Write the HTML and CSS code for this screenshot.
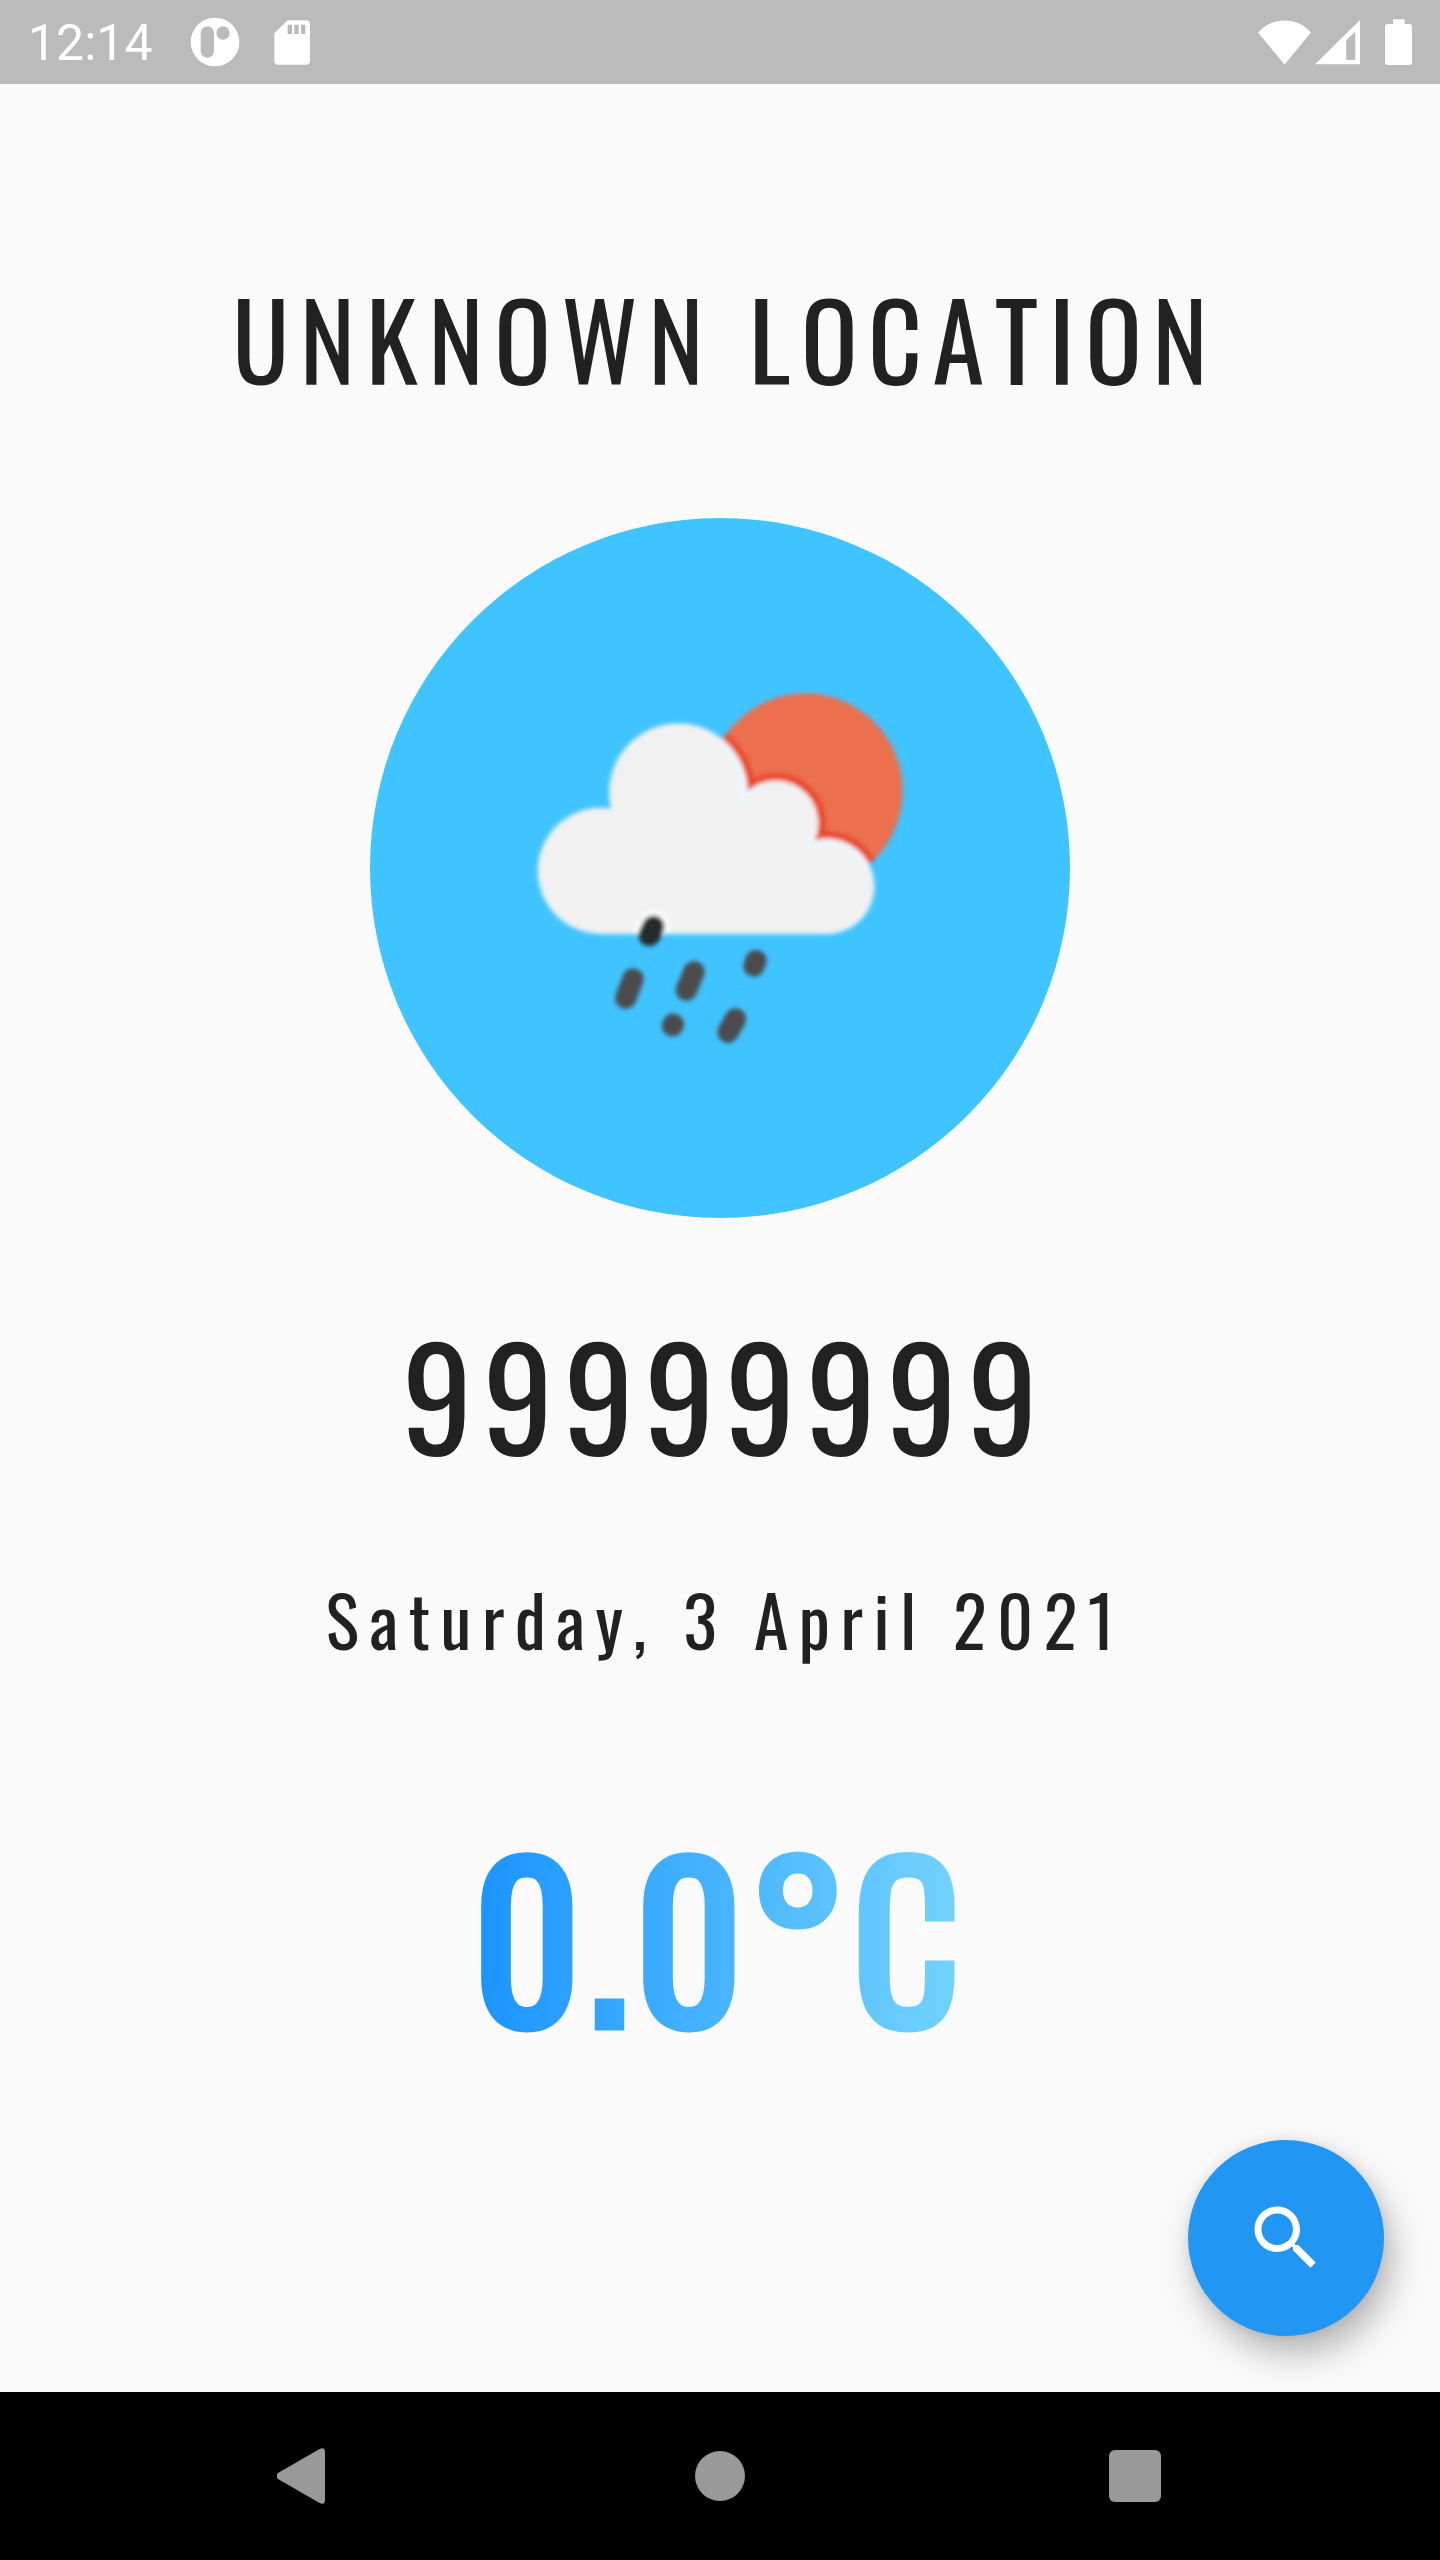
FILE: index.html
```html
<!DOCTYPE html>
<html lang="en">
<head>
  <meta charset="utf-8">
  <meta name="viewport" content="width=device-width, initial-scale=1">
  <title>Weather</title>
  <link rel="stylesheet" href="styles.css">
</head>
<body>
  <header class="status-bar">
    <div class="status-group">
      <time class="clock">12:14</time>
      <svg class="icon-app" viewBox="0 0 150 150" aria-hidden="true">
        <path fill="#fff" fill-rule="evenodd" d="M75 2a73 73 0 1 1 0 146a73 73 0 1 1 0-146zM52 28a20 20 0 0 0-20 20v54a20 20 0 0 0 40 0V48a20 20 0 0 0-20-20zM99 28a20 20 0 1 0 0 40a20 20 0 1 0 0-40z"/>
      </svg>
      <svg class="icon-sd" viewBox="0 0 108 135" aria-hidden="true">
        <path fill="#fff" fill-rule="evenodd" d="M41 1H96a12 12 0 0 1 12 12V122a12 12 0 0 1-12 12H13a12 12 0 0 1-12-12V40zM41 14v28h13V14zM61 14v28h13V14zM81 14v28h13V14z"/>
      </svg>
    </div>
    <div class="status-group">
      <svg class="icon-wifi" viewBox="0 0 159 134" aria-hidden="true">
        <path fill="#fff" d="M79.500 133L0 37C20 14 48 1 79.500 1S139 14 159 37z"/>
      </svg>
      <svg class="icon-signal" viewBox="0 0 134 134" aria-hidden="true">
        <path fill="#fff" fill-rule="evenodd" d="M134 0V132H0zM120 34L93 60V119H120z"/>
      </svg>
      <svg class="icon-battery" viewBox="0 0 81 138" aria-hidden="true">
        <path fill="#fff" d="M24 1H59V15H73a8 8 0 0 1 8 8V130a8 8 0 0 1-8 8H8a8 8 0 0 1-8-8V23a8 8 0 0 1 8-8H24z"/>
      </svg>
    </div>
  </header>

  <main class="weather">
    <h1 class="location">UNKNOWN LOCATION</h1>
    <div class="badge">
      <svg class="badge-art" viewBox="-390 -426 2100 2100" role="img" aria-label="Rain with sun">
        <defs>
          <g id="cloud">
            <circle cx="302" cy="632" r="189"/>
            <circle cx="535" cy="398" r="208"/>
            <circle cx="828" cy="488" r="127"/>
            <circle cx="980" cy="679" r="143"/>
            <path d="M302 450H535L828 440L980 600V822H302z"/>
          </g>
          <clipPath id="sun-clip"><circle cx="916" cy="392" r="292"/></clipPath>
          <clipPath id="cloud-clip">
            <circle cx="302" cy="632" r="189"/>
            <circle cx="535" cy="398" r="208"/>
            <circle cx="828" cy="488" r="127"/>
            <circle cx="980" cy="679" r="143"/>
            <path d="M302 450H535L828 440L980 600V822H302z"/>
          </clipPath>
          <filter id="soft"><feGaussianBlur stdDeviation="7"/></filter>
        </defs>
        <g filter="url(#soft)">
          <circle cx="916" cy="392" r="292" fill="#ec6f4d"/>
          <g clip-path="url(#sun-clip)"><use href="#cloud" fill="#e9482c" stroke="#e9482c" stroke-width="44"/></g>
          <use href="#cloud" fill="#f1f1f1"/>
          <g clip-path="url(#cloud-clip)" fill="none" stroke="#edf7fd" stroke-width="46">
            <path d="M670 238A208 208 0 0 1 743 382A127 127 0 0 1 954 535A143 143 0 0 1 1110 618"/>
          </g>
          <path d="M448 825L462 798" stroke="#fff" stroke-width="96" stroke-linecap="round" clip-path="url(#cloud-clip)"/>
          <path d="M448 825L460 800" stroke="#282a2c" stroke-width="66" stroke-linecap="round"/>
          <g stroke="#4b4b4e" stroke-width="64" stroke-linecap="round">
            <path d="M377 1014L399 957M559 990L582 935M684 1117L706 1077M762 918L768 902M517 1097L520 1093"/>
          </g>
        </g>
      </svg>
    </div>
    <p class="reading">99999999</p>
    <p class="date">Saturday, 3 April 2021</p>
    <p class="temperature">0.0°C</p>
    <button class="search-button" type="button" aria-label="Search">
      <svg class="icon-search" viewBox="0 0 24 24" aria-hidden="true">
        <path fill="#fff" d="M15.500 14h-.79l-.28-.27C15.410 12.590 16 11.110 16 9.500 16 5.910 13.090 3 9.500 3S3 5.910 3 9.500 5.910 16 9.500 16c1.610 0 3.090-.59 4.230-1.570l.27.28v.79l5 4.990L20.490 19l-4.990-5zm-6 0C7.010 14 5 11.990 5 9.500S7.010 5 9.500 5 14 7.010 14 9.500 11.990 14 9.500 14z"/>
      </svg>
    </button>
  </main>

  <nav class="nav-bar" aria-label="System navigation">
    <button class="nav-button" type="button" aria-label="Back">
      <svg class="nav-icon" viewBox="0 0 56 56" aria-hidden="true"><path fill="#999" d="M1 25L43 .8Q48 -1 48 4V52Q48 57 43 55.200L1 31Q-2 28 1 25z"/></svg>
    </button>
    <button class="nav-button" type="button" aria-label="Home">
      <svg class="nav-icon" viewBox="0 0 56 56" aria-hidden="true"><circle cx="28" cy="28" r="25" fill="#999"/></svg>
    </button>
    <button class="nav-button" type="button" aria-label="Recent apps">
      <svg class="nav-icon" viewBox="0 0 56 56" aria-hidden="true"><rect x="2" y="2" width="52" height="52" rx="6" fill="#999"/></svg>
    </button>
  </nav>
</body>
</html>
```

FILE: styles.css
```css
* {
  box-sizing: border-box;
}

body {
  margin: 0;
  min-height: 100vh;
  display: flex;
  flex-direction: column;
  background: #fafafa;
  color: #212121;
  font-family: Oswald, "Roboto Condensed", sans-serif;
  font-kerning: none;
}

h1,
p {
  margin: 0;
}

svg {
  display: block;
}

button {
  border: 0;
  padding: 0;
  cursor: pointer;
}

/* Status bar */
.status-bar {
  display: flex;
  justify-content: space-between;
  align-items: center;
  height: 84px;
  padding: 0 28px;
  background: #bbb;
  color: #fff;
}

.status-group {
  display: flex;
  align-items: center;
}

.clock {
  padding-top: 2px;
  font: 400 50px/60px Roboto, sans-serif;
}

.icon-app {
  width: 50px;
  height: 50px;
  margin-left: 37px;
}

.icon-sd {
  width: 36px;
  height: 45px;
  margin-left: 34px;
}

.icon-wifi {
  width: 53px;
  height: 45px;
}

.icon-signal {
  width: 45px;
  height: 45px;
  margin: 0 25px 0 4px;
}

.icon-battery {
  width: 27px;
  height: 46px;
}

/* Weather */
.weather {
  position: relative;
  flex: 1;
  display: flex;
  flex-direction: column;
  align-items: center;
  padding: 176px 56px 56px;
  text-align: center;
}

/* The left padding balances the tracking after the last letter */
.location {
  padding-left: 0.1em;
  font-size: 105px;
  line-height: 156px;
  font-weight: 400;
  letter-spacing: 0.1em;
}

.badge {
  width: 700px;
  max-width: 100%;
  margin: 102px 0 70px;
  border-radius: 50%;
  background: #40c4ff;
}

.badge-art {
  width: 100%;
}

.reading {
  padding-left: 0.075em;
  font-size: 140px;
  line-height: 210px;
  letter-spacing: 0.075em;
}

.date {
  margin-top: 68px;
  padding-left: 0.15em;
  font-size: 70px;
  line-height: 104px;
  letter-spacing: 0.15em;
}

.temperature {
  margin-top: 106px;
  font-size: 210px;
  line-height: 312px;
  letter-spacing: 7px;
  background: linear-gradient(90deg, #1a94ff, #74d4fd);
  background-clip: text;
  -webkit-background-clip: text;
  -webkit-text-stroke: 7px transparent;
  color: transparent;
}

/* Floats over the lower right corner of the content */
.search-button {
  position: absolute;
  right: 56px;
  bottom: 56px;
  width: 196px;
  height: 196px;
  display: grid;
  place-items: center;
  border-radius: 50%;
  background: #2196f3;
  box-shadow: 8px 18px 34px rgba(0, 0, 0, 0.28), 0 0 12px rgba(0, 0, 0, 0.08);
}

.icon-search {
  width: 84px;
  height: 84px;
}

/* System navigation */
.nav-bar {
  display: flex;
  justify-content: center;
  height: 168px;
  background: #000;
}

.nav-button {
  width: 415px;
  display: grid;
  place-items: center;
  background: none;
}

.nav-icon {
  width: 56px;
  height: 56px;
}
```
